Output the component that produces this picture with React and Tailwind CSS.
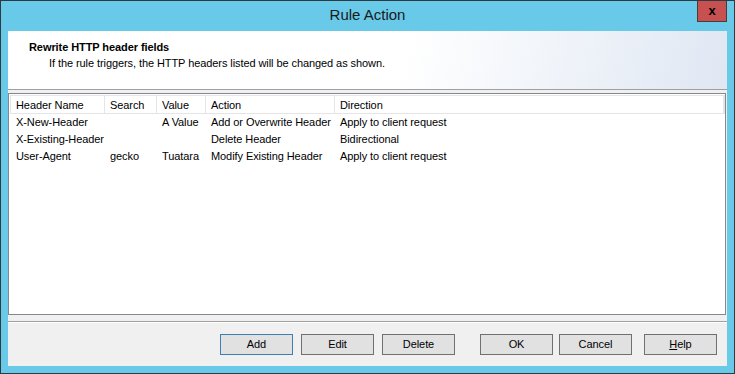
import React from "react";

const columns = [
  { key: "name", label: "Header Name", width: "w-[94px]" },
  { key: "search", label: "Search", width: "w-[52px]" },
  { key: "value", label: "Value", width: "w-[49px]" },
  { key: "action", label: "Action", width: "w-[129px]" },
  { key: "direction", label: "Direction", width: "flex-1" },
];

const rows = [
  { name: "X-New-Header", search: "", value: "A Value", action: "Add or Overwrite Header", direction: "Apply to client request" },
  { name: "X-Existing-Header", search: "", value: "", action: "Delete Header", direction: "Bidirectional" },
  { name: "User-Agent", search: "gecko", value: "Tuatara", action: "Modify Existing Header", direction: "Apply to client request" },
];

const DialogButton = ({ children, focused }) => (
  <button
    className={`w-[73px] h-[21px] bg-[#e1e1e1] text-[11px] text-black border flex items-center justify-center ${
      focused ? "border-[#3c7fb1]" : "border-[#707070]"
    }`}
  >
    <span>{children}</span>
  </button>
);

const App = () => {
  return (
    <div className="w-[735px] h-[374px] border border-[#2d3a40] bg-[#68c9e9] flex flex-col font-['Liberation_Sans',Arial,sans-serif] tracking-[-0.08px]">
      {/* title bar */}
      <div className="relative h-[30px] flex items-center justify-center">
        <span className="text-[15px] text-[#1a1a1a] mt-[-1px] tracking-normal">Rule Action</span>
        <button className="absolute right-[7px] top-0 w-[30px] h-[21px] bg-[#c75050] border border-[#4a3a3a] border-t-0 flex items-center justify-center">
          <span className="text-[13px] font-bold text-black leading-none mt-[-1px]">x</span>
        </button>
      </div>

      <div className="flex-1 mx-[7px] mb-[7px] bg-[#f0f0f0] flex flex-col">
        {/* header panel */}
        <div className="h-[58px] bg-[linear-gradient(105deg,#ffffff_0%,#ffffff_55%,#dfe7f3_100%)] pl-[21px] pt-[9px]">
          <div className="text-[11px] font-bold text-black leading-[14px]">Rewrite HTTP header fields</div>
          <div className="text-[11px] text-black leading-[14px] mt-[2px] pl-[20px]">
            If the rule triggers, the HTTP headers listed will be changed as shown.
          </div>
        </div>
        <div className="h-px bg-[#a0a0a0]" />

        {/* list view */}
        <div className="mt-[3px] h-[222px] border border-[#828790] bg-white mr-[1px] pt-px pl-px">
          <div className="flex h-[19px] border border-[#e5e5e5] bg-white">
            {columns.map((c) => (
              <div
                key={c.key}
                className={`${c.width} pl-[5px] pt-[2px] border-r border-[#e5e5e5] text-[11px] text-black leading-[15px]`}
              >
                {c.label}
              </div>
            ))}
          </div>
          {rows.map((r) => (
            <div key={r.name} className="flex h-[17px] items-center">
              {columns.map((c) => (
                <div
                  key={c.key}
                  className={`${c.width} pl-[6px] text-[11px] text-black whitespace-nowrap ${c.key === "direction" ? "" : "pr-px"}`}
                >
                  {r[c.key]}
                </div>
              ))}
            </div>
          ))}
        </div>

        <div className="mt-[6px] h-px bg-[#a0a0a0]" />
        <div className="h-px bg-white" />

        {/* buttons */}
        <div className="flex items-start pt-[11px] pl-[212px]">
          <div className="flex gap-[8px]">
            <DialogButton focused>Add</DialogButton>
            <DialogButton>Edit</DialogButton>
            <DialogButton>Delete</DialogButton>
          </div>
          <div className="flex gap-[6px] ml-[25px]">
            <DialogButton>OK</DialogButton>
            <DialogButton>Cancel</DialogButton>
          </div>
          <div className="flex ml-[12px]">
            <DialogButton>
              <span className="underline">H</span>elp
            </DialogButton>
          </div>
        </div>
      </div>
    </div>
  );
};

export default App;
